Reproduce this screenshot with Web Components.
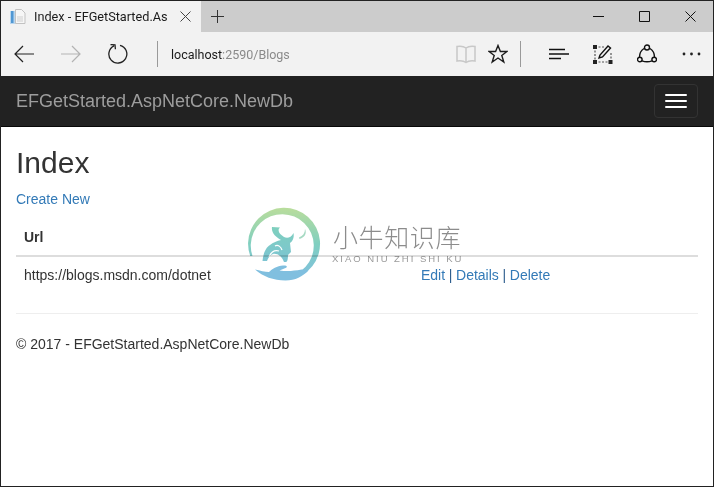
<!DOCTYPE html>
<html>
<head>
<meta charset="utf-8">
<title>Index - EFGetStarted.AspNetCore.NewDb</title>
<style>
  html, body { margin: 0; padding: 0; background: #fff; }
  body { font-family: "Liberation Sans", Arial, sans-serif; }
</style>
</head>
<body>
<browser-window>
  <browser-tabs title-text="Index - EFGetStarted.As"></browser-tabs>
  <browser-toolbar host-text="localhost" rest-text=":2590/Blogs"></browser-toolbar>
  <site-navbar brand="EFGetStarted.AspNetCore.NewDb"></site-navbar>
  <blog-page>
    <blog-row slot="rows" url="https://blogs.msdn.com/dotnet"></blog-row>
  </blog-page>
  <site-watermark></site-watermark>
</browser-window>

<script>
// browser-window ===================================================================
class BrowserWindow extends HTMLElement {
  constructor() {
    super();
    this.attachShadow({ mode: "open" }).innerHTML = `
<style>
:host {
  display: flex;
  flex-direction: column;
  position: relative;
  box-sizing: border-box;
  width: 714px;
  height: 487px;
  border: 1px solid #222;
  overflow: hidden;
  background: #fff;
}
</style>
<slot></slot>`;
  }
}

// browser-tabs =====================================================================
class BrowserTabs extends HTMLElement {
  constructor() {
    super();
    this.attachShadow({ mode: "open" }).innerHTML = `
<style>
:host { display: flex; height: 31px; background: #cccccc; flex: none; }
.tab {
  display: flex; align-items: center; width: 200px; height: 31px;
  background: #f2f2f2; box-sizing: border-box; padding-left: 9px;
  font: 12.7px Roboto, "Liberation Sans", sans-serif; color: #1a1a1a;
}
.title { margin-left: 8px; width: 137px; white-space: nowrap; }
.close { margin-left: 9px; display: flex; }
.plus { margin-left: 10px; display: flex; align-items: center; }
.spacer { flex: 1; }
.caption { display: flex; align-items: center; }
.caption div { width: 46px; height: 31px; display: flex; align-items: center; justify-content: center; }
svg { display: block; }
</style>
<div class="tab">
  <svg width="16" height="16" viewBox="0 0 16 16">
    <path d="M0 2h7v13H0z" fill="#b9d6ee"/>
    <path d="M1 2h2.500v12H1z" fill="#4f97d3"/>
    <path d="M5.500 .5h6l3.500 3.500v10.500H5.500z" fill="#f6f6f6" stroke="#c2c2c2"/>
    <path d="M7 8h6M7 10h6M7 12h6" stroke="#cfcfcf"/>
  </svg>
  <span class="title"></span>
  <span class="close"><svg width="11" height="11" viewBox="0 0 11 11"><path d="M.5.5l10 10M10.500.5l-10 10" stroke="#444" fill="none"/></svg></span>
</div>
<span class="plus"><svg width="13" height="13" viewBox="0 0 13 13"><path d="M6.500 0v13M0 6.500h13" stroke="#333" fill="none"/></svg></span>
<span class="spacer"></span>
<div class="caption">
  <div><svg width="11" height="11" viewBox="0 0 11 11"><path d="M0 5.500h11" stroke="#111" fill="none"/></svg></div>
  <div><svg width="11" height="11" viewBox="0 0 11 11"><path d="M.5.5h10v10H.5z" stroke="#111" fill="none"/></svg></div>
  <div><svg width="11" height="11" viewBox="0 0 11 11"><path d="M.5.5l10 10M10.500.5l-10 10" stroke="#111" fill="none"/></svg></div>
</div>`;
  }

  connectedCallback() {
    this.shadowRoot.querySelector(".title").textContent = this.getAttribute("title-text") ?? "";
  }
}

// browser-toolbar ==================================================================
class BrowserToolbar extends HTMLElement {
  constructor() {
    super();
    this.attachShadow({ mode: "open" }).innerHTML = `
<style>
:host {
  display: flex; align-items: center; height: 44px; flex: none;
  background: #f2f2f2; box-sizing: border-box;
  font: 12.5px Roboto, "Liberation Sans", sans-serif;
}
svg { display: block; flex: none; }
.nav { display: flex; align-items: center; gap: 27px; margin-left: 13px; }
.sep { width: 1px; height: 26px; background: #9a9a9a; flex: none; }
.sep.first { margin-left: 29px; }
.address { margin-left: 13px; color: #1a1a1a; white-space: nowrap; }
.address span { color: #8a8a8a; }
.spacer { flex: 1; }
.end { display: flex; align-items: center; }
</style>
<div class="nav">
  <svg width="20" height="18" viewBox="0 0 20 18"><path d="M20 9H1M9 1 1 9l8 8" fill="none" stroke="#222" stroke-width="1.200"/></svg>
  <svg width="20" height="18" viewBox="0 0 20 18"><path d="M0 9h19M11 1l8 8-8 8" fill="none" stroke="#b3b3b3" stroke-width="1.200"/></svg>
  <svg width="20" height="20" viewBox="0 0 20 20"><path d="M12 1.300A9 9 0 1 1 6 1.900M2.500.6 7 .8l.4 4.400" fill="none" stroke="#222" stroke-width="1.300"/></svg>
</div>
<span class="sep first"></span>
<span class="address"><b style="font-weight:400" id="host"></b><span id="rest"></span></span>
<span class="spacer"></span>
<div class="end">
  <svg width="20" height="19" viewBox="0 0 20 19"><path d="M10 3C8 1.500 4 1 1 1.500V16c3-.5 7 0 9 1.500 2-1.500 6-2 9-1.500V1.500C16 1 12 1.500 10 3zM10 3v14" fill="none" stroke="#c8c8c8" stroke-width="1.500"/></svg>
  <svg style="margin-left:12px" width="20" height="20" viewBox="0 0 20 20"><path d="M10 1.500l2.400 6h6.600l-5.200 4 2 6.500-5.800-4-5.800 4 2-6.500-5.200-4h6.600z" fill="none" stroke="#1c1c1c" stroke-width="1.400"/></svg>
  <span class="sep" style="margin-left:12px"></span>
  <svg style="margin-left:28px" width="20" height="12" viewBox="0 0 20 12"><path d="M0 1.500h16M0 6h20M0 10.500h12" fill="none" stroke="#111" stroke-width="1.300"/></svg>
  <svg style="margin-left:24px" width="20" height="20" viewBox="0 0 20 20"><path d="M2 3h10M2 18h16M2 3v15M18 9v9" fill="none" stroke="#555" stroke-width="1.200" stroke-dasharray="2 1.500"/><path d="M0 1h4v4H0zM0 16h4v4H0zM15.500 16h4v4h-4z" fill="#222"/><path d="M6 14l1-3 8-9 2.500 2-8 9z" fill="#f2f2f2" stroke="#111" stroke-width="1.400"/></svg>
  <svg style="margin-left:24px" width="20" height="20" viewBox="0 0 20 20"><path d="M7 4.500C4 6.500 2.500 9.500 2.500 13M13 4.500c3 2 4.500 5 4.500 8.500M5 16.800c3 1.200 7 1.200 10 0" fill="none" stroke="#111" stroke-width="1.400"/><circle cx="10" cy="3.500" r="2.500" fill="#f2f2f2" stroke="#111" stroke-width="1.400"/><circle cx="2.800" cy="15.500" r="2.300" fill="#f2f2f2" stroke="#111" stroke-width="1.400"/><circle cx="17.200" cy="15.500" r="2.300" fill="#f2f2f2" stroke="#111" stroke-width="1.400"/></svg>
  <svg style="margin-left:25px;margin-right:12px" width="19" height="4" viewBox="0 0 19 4"><circle cx="2" cy="2" r="1.400" fill="#222"/><circle cx="9.500" cy="2" r="1.400" fill="#222"/><circle cx="17" cy="2" r="1.400" fill="#222"/></svg>
</div>`;
  }

  connectedCallback() {
    this.shadowRoot.querySelector("#host").textContent = this.getAttribute("host-text") ?? "";
    this.shadowRoot.querySelector("#rest").textContent = this.getAttribute("rest-text") ?? "";
  }
}

// site-navbar ======================================================================
class SiteNavbar extends HTMLElement {
  constructor() {
    super();
    this.attachShadow({ mode: "open" }).innerHTML = `
<style>
:host {
  display: flex; align-items: center; justify-content: space-between;
  flex: none; height: 51px; box-sizing: border-box;
  background: #222222; border-bottom: 1px solid #080808;
  padding: 0 15px;
}
.brand { font: 18px/20px "Liberation Sans", Arial, sans-serif; color: #9d9d9d; }
.toggle {
  display: flex; flex-direction: column; gap: 4px; justify-content: center;
  box-sizing: border-box; width: 44px; height: 34px; padding: 0 10px;
  border: 1px solid #333; border-radius: 4px;
}
.toggle i { display: block; height: 2px; border-radius: 1px; background: #fff; }
</style>
<span class="brand"></span>
<span class="toggle"><i></i><i></i><i></i></span>`;
  }

  connectedCallback() {
    this.shadowRoot.querySelector(".brand").textContent = this.getAttribute("brand") ?? "";
  }
}

// blog-page ========================================================================
class BlogPage extends HTMLElement {
  constructor() {
    super();
    this.attachShadow({ mode: "open" }).innerHTML = `
<style>
:host {
  display: block; padding: 0 15px; color: #333;
  font: 14px/20px "Liberation Sans", Arial, sans-serif;
}
h2 { font-size: 30px; font-weight: 500; line-height: 33px; margin: 19px 0 10px; }
p { margin: 0 0 10px; }
a { color: #337ab7; text-decoration: none; }
.head {
  display: grid; grid-template-columns: 405px 1fr; padding: 8px;
  font-weight: 700; border-bottom: 2px solid #ddd;
}
hr { border: 0; border-top: 1px solid #eee; margin: 20px 0; }
footer p { margin: 0; }
</style>
<h2>Index</h2>
<p><a href="#">Create New</a></p>
<div class="head"><span>Url</span><span></span></div>
<slot name="rows"></slot>
<hr>
<footer><p>© 2017 - EFGetStarted.AspNetCore.NewDb</p></footer>`;
  }
}

// blog-row =========================================================================
class BlogRow extends HTMLElement {
  constructor() {
    super();
    this.attachShadow({ mode: "open" }).innerHTML = `
<style>
:host {
  display: grid; grid-template-columns: 397px 1fr; padding: 8px;
  font: 14px/20px "Liberation Sans", Arial, sans-serif; color: #333;
}
a { color: #337ab7; text-decoration: none; }
.actions { color: #2f5f8f; word-spacing: -.25px; }
</style>
<span id="url"></span>
<span class="actions"><a href="#">Edit</a> | <a href="#">Details</a> | <a href="#">Delete</a></span>`;
  }

  connectedCallback() {
    this.shadowRoot.querySelector("#url").textContent = this.getAttribute("url") ?? "";
  }
}

// site-watermark ===================================================================
class SiteWatermark extends HTMLElement {
  constructor() {
    super();
    this.attachShadow({ mode: "open" }).innerHTML = `
<style>
:host {
  position: absolute; left: 243px; top: 203px; display: flex; gap: 9px;
  pointer-events: none; mix-blend-mode: multiply;
}
svg { display: block; flex: none; }
.words { display: flex; flex-direction: column; margin-top: 17px; }
.cn {
  font: 300 25px/30px "Noto Sans CJK SC", sans-serif;
  color: #8c8c8c; letter-spacing: .6px; white-space: nowrap;
}
.en {
  font: 9.500px/12px "Liberation Sans", Arial, sans-serif; color: #9a9a9a;
  letter-spacing: 1.970px; white-space: nowrap; margin: 2px 0 0 -1px;
}
</style>
<svg width="80" height="80" viewBox="0 0 80 80">
  <defs>
    <linearGradient id="g" gradientUnits="userSpaceOnUse" x1="0" y1="4" x2="0" y2="76">
      <stop offset="0" stop-color="#b9dd9c"/>
      <stop offset=".5" stop-color="#80cfc0"/>
      <stop offset="1" stop-color="#7fbfe0"/>
    </linearGradient>
    <linearGradient id="b" gradientUnits="userSpaceOnUse" x1="0" y1="22" x2="0" y2="60">
      <stop offset="0" stop-color="#7fd0bd"/>
      <stop offset="1" stop-color="#7cc3d4"/>
    </linearGradient>
  </defs>
  <!-- anillo -->
  <path d="M6.200 52A36 36 0 1 1 58 71L52 70A31.500 31.500 0 1 0 8.500 52z" fill="url(#g)"/>
  <!-- mano -->
  <path d="M11 65.500c5 1 10 2.500 14 2.500 3-3 8-6 14-6.500 4-.5 5 1.500 2.500 2.500l-6 2.500c8 1 14 .5 22-1l7 1c-6 6-13 10-23 10-12 0-22.500-4-30.500-11z" fill="#80bfdf"/>
  <!-- toro -->
  <path fill="url(#b)" d="M28 23 36 23.500C33 26 35 30 40 33 43 34.500 47 34 49.500 29 50.500 34 48 38 46 39L47 48 44 51C44 56 43 58 42 58H40C38 52 33 49 29 50 26 51 24 54 23 57H18.500C19 50 22 43 26 41 29 38.500 33 37 37 36 32 33 27 29 28 23z"/>
  <path fill="none" stroke="#fff" stroke-width="1.200" d="M31 42C34 40 37 43 38 46M25 53C27 48 31 46 35 47"/>
  <path fill="#a5d9c2" d="M55 33.500C59 32 61 29 61 25 63 29 61 33.500 55.500 35z"/>
</svg>
<div class="words">
  <span class="cn">小牛知识库</span>
  <span class="en">XIAO NIU ZHI SHI KU</span>
</div>`;
  }
}

window.customElements.define("browser-window", BrowserWindow);
window.customElements.define("browser-tabs", BrowserTabs);
window.customElements.define("browser-toolbar", BrowserToolbar);
window.customElements.define("site-navbar", SiteNavbar);
window.customElements.define("blog-page", BlogPage);
window.customElements.define("blog-row", BlogRow);
window.customElements.define("site-watermark", SiteWatermark);
</script>
</body>
</html>
